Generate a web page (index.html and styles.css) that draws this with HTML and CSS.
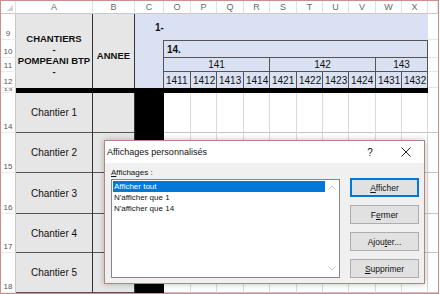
FILE: index.html
```html
<!DOCTYPE html>
<html lang="fr">
<head>
  <meta charset="UTF-8">
  <title>Affichages personnalisés</title>
  <link rel="stylesheet" href="styles.css">
</head>
<body>

  <div class="sheet" id="sheet">
    <!-- column letters -->
    <div class="colh corner"><span class="tri"></span></div>
    <div class="colh">A</div>
    <div class="colh">B</div>
    <div class="colh">C</div>
    <div class="colh">O</div>
    <div class="colh">P</div>
    <div class="colh">Q</div>
    <div class="colh">R</div>
    <div class="colh">S</div>
    <div class="colh">T</div>
    <div class="colh">U</div>
    <div class="colh">V</div>
    <div class="colh">W</div>
    <div class="colh">X</div>
    <div class="colh"></div>

    <!-- row 9 -->
    <div class="rowh">9</div>
    <div class="hd-a">CHANTIERS<br>-<br>POMPEANI BTP<br>-</div>
    <div class="hd-b">ANNEE</div>
    <div class="top-blue">1-</div>
    <div class="fill"></div>

    <!-- row 10 -->
    <div class="rowh">10</div>
    <div class="c-blue"></div>
    <div class="box-top">14.</div>
    <div class="fill"></div>

    <!-- row 11 -->
    <div class="rowh">11</div>
    <div class="grp grp4">141</div>
    <div class="grp grp4">142</div>
    <div class="grp grp2">143</div>
    <div class="fill"></div>

    <!-- row 12 -->
    <div class="rowh">12</div>
    <div class="code">1411</div>
    <div class="code">1412</div>
    <div class="code">1413</div>
    <div class="code">1414</div>
    <div class="code">1421</div>
    <div class="code">1422</div>
    <div class="code">1423</div>
    <div class="code">1424</div>
    <div class="code">1431</div>
    <div class="code">1432</div>
    <div class="fill"></div>

    <!-- row 13 (squeezed) -->
    <div class="rowh tiny"><span>13</span></div>
    <div class="bar"></div>
    <div class="blank"></div>

    <!-- dialog -->
    <div class="dialog">
      <div class="dlg-title">
        <span class="dlg-name">Affichages personnalisés</span>
        <span class="dlg-help">?</span>
        <span class="dlg-close">
          <svg width="10" height="10" viewBox="0 0 10 10"><path d="M0.5 0.5 L9.5 9.5 M9.5 0.5 L0.5 9.5" stroke="#222" stroke-width="1" fill="none"/></svg>
        </span>
      </div>
      <div class="dlg-body">
        <div class="dlg-left">
          <div class="dlg-label"><u>A</u>ffichages :</div>
          <div class="listbox">
            <div class="items">
              <div class="item selected">Afficher tout</div>
              <div class="item">N'afficher que 1</div>
              <div class="item">N'afficher que 14</div>
            </div>
            <div class="scroll">
              <svg width="8" height="5" viewBox="0 0 8 5"><path d="M0.5 4.5 L4 1 L7.5 4.5" stroke="#c4c4c4" fill="none"/></svg>
              <svg width="8" height="5" viewBox="0 0 8 5"><path d="M0.5 0.5 L4 4 L7.5 0.5" stroke="#c4c4c4" fill="none"/></svg>
            </div>
          </div>
        </div>
        <div class="dlg-buttons">
          <button class="btn default"><u>A</u>fficher</button>
          <button class="btn">F<u>e</u>rmer</button>
          <button class="btn">Ajou<u>t</u>er...</button>
          <button class="btn"><u>S</u>upprimer</button>
        </div>
      </div>
    </div>
  </div>

  <script>
    const sheet = document.getElementById('sheet');

    for (let i = 1; i <= 5; i++) {
      let html = '<div class="rowh">' + (13 + i) + '</div>';
      html += '<div class="name">Chantier ' + i + '</div>';
      html += '<div class="yr"></div>';
      html += '<div class="blk"></div>';
      for (let c = 0; c < 10; c++) {
        html += '<div class="cell"></div>';
      }
      html += '<div class="cell last"></div>';
      sheet.insertAdjacentHTML('beforeend', html);
    }
  </script>

</body>
</html>
```

FILE: styles.css
```css
body {
  margin: 0;
  background: #fff;
  font-family: "Liberation Sans", Arial, sans-serif;
  color: #111;
}

.sheet {
  position: relative;
  display: grid;
  grid-template-columns: 15px 77px 42px 29px 27px 26px 27px 26px 27px 26px 26px 27px 26px 26px 10px;
  grid-template-rows: 13px 26px 18px 14px 16px 5px 40px 40px 41px 39px 40px;
  width: 437px;
  border: 1px solid #cc8f8f;
}

.sheet div {
  box-sizing: border-box;
}

/* headers */
.colh {
  display: flex;
  align-items: center;
  justify-content: center;
  font-size: 9px;
  color: #666;
  border-right: 1px solid #e0e0e0;
  border-bottom: 1px solid #c8c8c8;
}

.corner {
  position: relative;
}

.tri {
  position: absolute;
  right: 2px;
  bottom: 2px;
  width: 0;
  height: 0;
  border-left: 6px solid transparent;
  border-bottom: 6px solid #d2d2d2;
}

.rowh {
  display: flex;
  align-items: flex-end;
  justify-content: center;
  font-size: 8px;
  color: #555;
  padding-bottom: 1px;
  border-right: 1px solid #c8c8c8;
  border-bottom: 1px solid #ececec;
  overflow: hidden;
}

.rowh.tiny {
  align-items: center;
  padding-bottom: 0;
}

.rowh.tiny span {
  display: block;
  line-height: 8px;
  transform: scaleY(0.5);
}

/* top block */
.hd-a, .hd-b {
  grid-row: span 4;
  display: flex;
  align-items: center;
  justify-content: center;
  text-align: center;
  padding-top: 8px;
  background: #e7e6e6;
  border-right: 1px solid #333;
  font-weight: bold;
  font-size: 9.5px;
  line-height: 11px;
}

.top-blue {
  grid-column: span 11;
  display: flex;
  align-items: center;
  padding-left: 20px;
  background: #dae1f2;
  font-weight: bold;
  font-size: 10px;
}

.fill {
  border-bottom: 1px solid #e6e6e6;
}

.c-blue {
  grid-row: span 3;
  background: #dae1f2;
  border-right: 1px solid #555;
}

.box-top {
  grid-column: span 10;
  display: flex;
  align-items: center;
  padding-left: 3px;
  background: #dae1f2;
  border-top: 1px solid #555;
  border-right: 1px solid #555;
  border-bottom: 1px solid #555;
  font-weight: bold;
  font-size: 10px;
}

.grp {
  display: flex;
  align-items: center;
  justify-content: center;
  background: #dae1f2;
  border-right: 1px solid #555;
  border-bottom: 1px solid #555;
  font-size: 10px;
}

.grp4 {
  grid-column: span 4;
}

.grp2 {
  grid-column: span 2;
}

.code {
  display: flex;
  align-items: center;
  padding-left: 2px;
  background: #dae1f2;
  border-right: 1px solid #555;
  font-size: 10px;
}

.bar {
  grid-column: span 13;
  background: #000;
}

/* data rows */
.name {
  display: flex;
  align-items: center;
  justify-content: center;
  background: #e7e6e6;
  border-right: 1px solid #333;
  border-bottom: 1px solid #555;
  font-size: 10px;
}

.yr {
  background: #e7e6e6;
  border-right: 1px solid #333;
  border-bottom: 1px solid #555;
}

.blk {
  background: #000;
}

.cell {
  border-right: 1px solid #dadada;
  border-bottom: 1px solid #c4c4c4;
}

.cell.last {
  border-right: none;
}

/* dialog */
.dialog {
  position: absolute;
  left: 103px;
  top: 139px;
  width: 321px;
  height: 144px;
  box-sizing: border-box;
  display: flex;
  flex-direction: column;
  background: #f0f0f0;
  border: 1px solid #b98282;
  box-shadow: 0 0 6px rgba(0, 0, 0, 0.25);
  font-size: 8px;
}

.dlg-title {
  display: flex;
  align-items: center;
  height: 22px;
  background: #fff;
}

.dlg-name {
  flex: 1;
  padding-left: 2px;
  font-size: 9px;
}

.dlg-help, .dlg-close {
  width: 36px;
  display: flex;
  justify-content: center;
  align-items: center;
  font-size: 10px;
}

.dlg-body {
  display: flex;
  padding: 0 5px 0 6px;
}

.dlg-left {
  width: 229px;
}

.dlg-label {
  margin-top: 3px;
  height: 13px;
  line-height: 13px;
}

.listbox {
  display: flex;
  height: 99px;
  box-sizing: border-box;
  background: #fff;
  border: 1px solid #828790;
}

.items {
  flex: 1;
  padding: 1px 0 0 1px;
}

.item {
  height: 11px;
  line-height: 11px;
  padding-left: 1px;
}

.item.selected {
  background: #0078d7;
  color: #fff;
}

.scroll {
  width: 14px;
  display: flex;
  flex-direction: column;
  justify-content: space-between;
  align-items: center;
  padding: 5px 0 6px;
}

.dlg-buttons {
  display: flex;
  flex-direction: column;
  gap: 8px;
  margin-left: 10px;
  padding-top: 15px;
}

.btn {
  width: 69px;
  height: 19px;
  padding: 0;
  background: #e1e1e1;
  border: 1px solid #adadad;
  font-family: "Liberation Sans", Arial, sans-serif;
  font-size: 8.5px;
  color: #111;
}

.btn.default {
  border-color: #0078d7;
  box-shadow: inset 0 0 0 1px #0078d7;
}
```
